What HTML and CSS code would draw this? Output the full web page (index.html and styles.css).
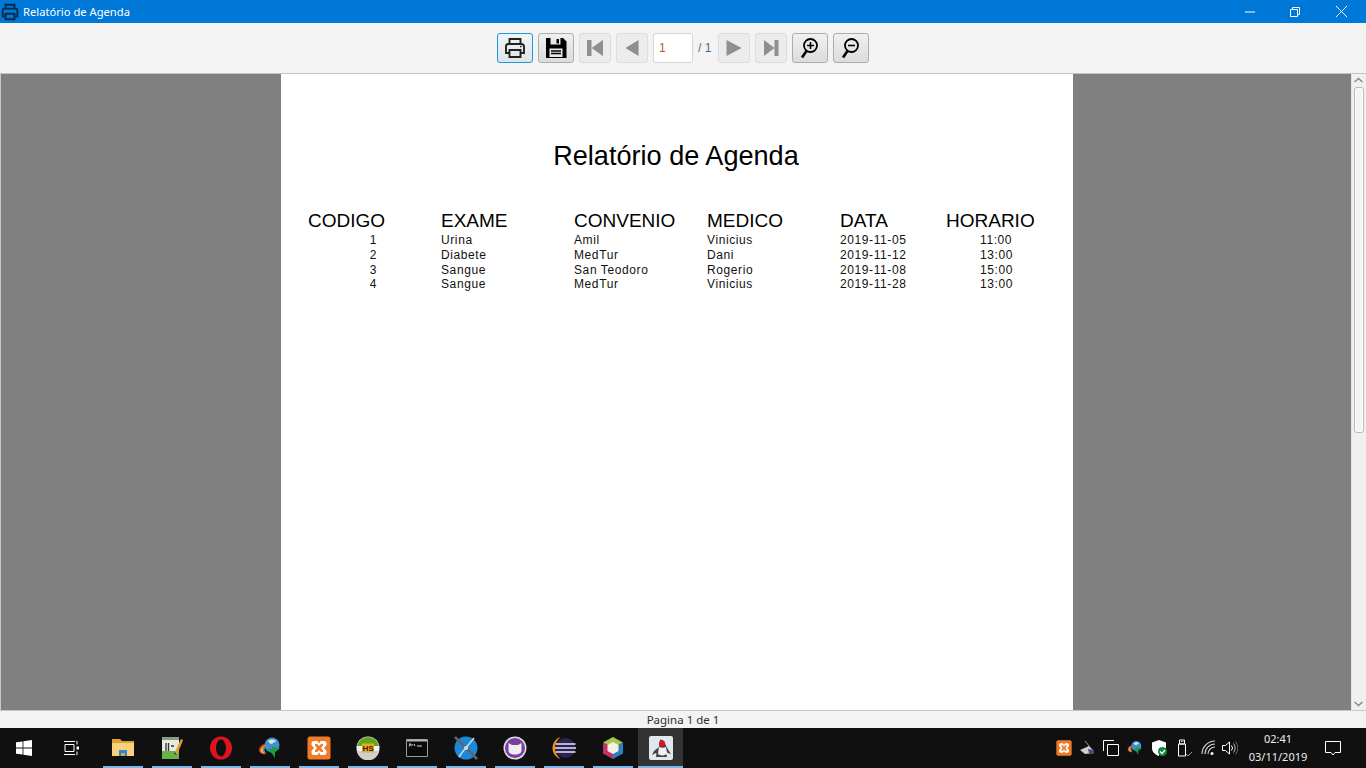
FILE: index.html
```html
<!DOCTYPE html>
<html lang="pt">
<head>
<meta charset="utf-8">
<title>Relatório de Agenda</title>
<link rel="stylesheet" href="styles.css">
</head>
<body>
<svg class="defs" width="0" height="0" aria-hidden="true">
  <defs>
    <symbol id="xampp" viewBox="0 0 24 24">
      <rect x="0.5" y="0.5" width="23" height="23" rx="2.5" fill="#f07a25"/>
      <path d="M7 5h3.500l1.500 2.500L13.500 5H17a2.500 2.500 0 0 1 2.500 2.500v1.500L17 12l2.500 3v1.500A2.500 2.500 0 0 1 17 19h-3.500L12 16.500 10.500 19H7a2.500 2.500 0 0 1-2.500-2.500V15L7 12 4.500 9V7.500A2.500 2.500 0 0 1 7 5z" fill="#fff"/>
      <path d="M8 8h2l2 2 2-2h2v1.500L14 12l2 2.500V16h-2l-2-2-2 2H8v-1.500L10 12 8 9.500z" fill="#f07a25"/>
    </symbol>
    <symbol id="idm" viewBox="0 0 24 24">
      <circle cx="14" cy="9" r="7.500" fill="#3f8fd8"/>
      <path d="M10 5c2-2 6-2 8 0-1 2-3 1-4 3-2 0-3-1-4-3z" fill="#d9e8c9"/>
      <path d="M1 14c1-5 5-7 8-6-3 1-5 3-5 6 0 2 2 3 4 4-4 1-7-1-7-4z" fill="#e23b2e"/>
      <path d="M2.500 14c1-3 4-5 6-5-2 1-3.500 3-3.500 5 0 1.500 1 2.500 3 3.500-3 0-5.500-1-5.500-3.500z" fill="#f4c01e"/>
      <path d="M4.500 14c.5-2 2-3 3.500-3.500-1 1-1.500 2.500-1.500 3.500 0 1 .5 2 2 3-2 0-4-1-4-3z" fill="#3f9bd8"/>
      <path d="M8 13h6v-2.500l8 2-5 3v6.500l-3-4.500z" fill="#1f9c3a"/>
    </symbol>
  </defs>
</svg>

<header class="titlebar">
  <svg class="title-icon" viewBox="0 0 16 16" width="18" height="18"><path d="M4 5V1.500h8V5M4 12H1.500V6.500a1.500 1.500 0 0 1 1.500-1.500h10a1.500 1.500 0 0 1 1.500 1.500V12H12M4 9.500h8v5H4z" fill="none" stroke="#0b2a4a" stroke-width="1.700"/></svg>
  <span class="title-text">Relatório de Agenda</span>
  <div class="winctl">
    <span class="winbtn"><svg viewBox="0 0 10 10" width="10" height="10"><path d="M0 5h10" stroke="#fff" stroke-width="1"/></svg></span>
    <span class="winbtn"><svg viewBox="0 0 10 10" width="10" height="10"><path d="M.5 2.500h7v7h-7zM2.500 2.500V.5h7v7H7.500" fill="none" stroke="#fff"/></svg></span>
    <span class="winbtn"><svg viewBox="0 0 10 10" width="11" height="11"><path d="M0 0l10 10M10 0L0 10" stroke="#fff" stroke-width=".9"/></svg></span>
  </div>
</header>

<nav class="toolbar">
  <button class="tb focus"><svg viewBox="0 0 24 24" width="24" height="24"><path d="M6.500 8V3h11v5M6.500 17H3V10.500A2.500 2.500 0 0 1 5.500 8h13a2.500 2.500 0 0 1 2.500 2.500V17h-3.500M6.500 14h11v7h-11z" fill="none" stroke="#222" stroke-width="1.900"/><path d="M17 10.500h1.500" stroke="#222" stroke-width="1.500"/></svg></button>
  <button class="tb"><svg viewBox="0 0 24 24" width="24" height="24"><path d="M2 2h17l3.500 3.500V22H2z" fill="#000"/><path d="M6.500 2h10v6.500h-10z" fill="#e8e8e8"/><path d="M12.500 3h2.500v4.500h-2.500z" fill="#000"/><path d="M5.500 12.500h13V21h-13z" fill="#e8e8e8"/><path d="M7 15h10M7 17.500h10" stroke="#000" stroke-width="1.300"/></svg></button>
  <button class="tb off"><svg viewBox="0 0 24 24" width="24" height="24"><path d="M4 4h4.500v16H4zM20 4v16L8.500 12z" fill="#8f8f8f"/></svg></button>
  <button class="tb off"><svg viewBox="0 0 24 24" width="24" height="24"><path d="M18.500 4v16L5.500 12z" fill="#8f8f8f"/></svg></button>
  <div class="pageinput">1</div>
  <span class="pagecount">/ 1</span>
  <button class="tb off"><svg viewBox="0 0 24 24" width="24" height="24"><path d="M4.500 4v16l15-8z" fill="#8f8f8f"/></svg></button>
  <button class="tb off"><svg viewBox="0 0 24 24" width="24" height="24"><path d="M19.500 4H15.500v16h4zM5 4v16l10.500-8z" fill="#8f8f8f"/></svg></button>
  <button class="tb zoomb"><svg viewBox="0 0 24 24" width="24" height="24"><circle cx="12.500" cy="9.500" r="6.500" fill="none" stroke="#000" stroke-width="1.800"/><path d="M8.500 15l-4.500 6.500" stroke="#000" stroke-width="2.600"/><path d="M9 9.500h7M12.500 6v7" stroke="#000" stroke-width="1.600"/></svg></button>
  <button class="tb zoomb"><svg viewBox="0 0 24 24" width="24" height="24"><circle cx="12.500" cy="9.500" r="6.500" fill="none" stroke="#000" stroke-width="1.800"/><path d="M8.500 15l-4.500 6.500" stroke="#000" stroke-width="2.600"/><path d="M9 9.500h7" stroke="#000" stroke-width="1.600"/></svg></button>
</nav>

<main class="viewer">
  <div class="canvas">
    <section class="page">
      <h1 class="report-title">Relatório de Agenda</h1>
      <div class="report">
        <div class="hd">CODIGO</div><div class="hd">EXAME</div><div class="hd">CONVENIO</div><div class="hd">MEDICO</div><div class="hd">DATA</div><div class="hd">HORARIO</div>
        <div class="c num">1</div><div class="c">Urina</div><div class="c">Amil</div><div class="c">Vinicius</div><div class="c">2019-11-05</div><div class="c hr">11:00</div>
        <div class="c num">2</div><div class="c">Diabete</div><div class="c">MedTur</div><div class="c">Dani</div><div class="c">2019-11-12</div><div class="c hr">13:00</div>
        <div class="c num">3</div><div class="c">Sangue</div><div class="c">San Teodoro</div><div class="c">Rogerio</div><div class="c">2019-11-08</div><div class="c hr">15:00</div>
        <div class="c num">4</div><div class="c">Sangue</div><div class="c">MedTur</div><div class="c">Vinicius</div><div class="c">2019-11-28</div><div class="c hr">13:00</div>
      </div>
    </section>
  </div>
  <aside class="scrollbar">
    <svg class="arrow" viewBox="0 0 15 13" width="15" height="13"><path d="M3.500 8l4-3.500 4 3.500" fill="none" stroke="#8a8a8a" stroke-width="1.500"/></svg>
    <div class="thumb"></div>
    <svg class="arrow down" viewBox="0 0 15 13" width="15" height="13"><path d="M3.500 5l4 3.500 4-3.500" fill="none" stroke="#8a8a8a" stroke-width="1.500"/></svg>
  </aside>
</main>

<div class="status">Pagina 1 de 1</div>

<footer class="taskbar">
  <span class="tk-start"><svg viewBox="0 0 16 16" width="16" height="16"><path d="M0 2.300l6.600-.9v6.200H0zM7.400 1.300L16 0v7.600H7.400zM0 8.400h6.600v6.200L0 13.700zM7.400 8.400H16V16l-8.600-1.200z" fill="#fff"/></svg></span>
  <span class="tk-view"><svg viewBox="0 0 16 16" width="16" height="16"><path d="M0 1.500h11M0 14.500h11M1 4.500h9v7H1zM13 1v3.500M13 11.500V15" fill="none" stroke="#fff" stroke-width="1"/><path d="M12.500 6.500h2.500v3h-2.500z" fill="#fff"/></svg></span>
  <div class="apps">
    <span class="app"><svg viewBox="0 0 24 24" width="24" height="24"><path d="M1 3h8l2 2h12v3H1z" fill="#d9a436"/><path d="M1 7h22v13H1z" fill="#f7d27a"/><path d="M8 20v-6h8v6h-2.500v-3h-3v3z" fill="#2a86d8"/><path d="M10.500 17h3v3h-3z" fill="#e0a82e"/></svg></span>
    <span class="app"><svg viewBox="0 0 24 24" width="24" height="24"><path d="M2 1h17v22H2z" fill="#e4ebe0"/><path d="M2 1h17v3H2z" fill="#8a9a8a"/><path d="M2 15h17v8H2z" fill="#66b54a"/><path d="M6 7v8M8.500 7v8M11 10h3" stroke="#333" stroke-width="1.300"/><path d="M14 18L21 3l2 1-6 15z" fill="#e0a030"/><path d="M14 18l1-2 2 3z" fill="#333"/></svg></span>
    <span class="app"><svg viewBox="0 0 24 24" width="24" height="24"><ellipse cx="12" cy="12" rx="11" ry="11.500" fill="#e0121f"/><ellipse cx="12" cy="12" rx="5" ry="8.500" fill="#101010"/></svg></span>
    <span class="app"><svg width="24" height="24"><use href="#idm"/></svg></span>
    <span class="app"><svg width="24" height="24"><use href="#xampp"/></svg></span>
    <span class="app"><svg viewBox="0 0 24 24" width="24" height="24"><circle cx="12" cy="12" r="11.500" fill="#f2f2f2"/><path d="M.8 10a11.500 11.500 0 0 1 22.400 0z" fill="#63a51f"/><path d="M.7 15a11.500 11.500 0 0 0 22.600 0z" fill="#cfcfcf"/><path d="M6 7.500h12v9H6z" fill="#efa91d"/><text x="12" y="15.200" class="hs">HS</text></svg></span>
    <span class="app"><svg viewBox="0 0 24 24" width="24" height="24"><path d="M1.500 3.500h21v17h-21z" fill="#0b0b0b" stroke="#9a9a9a"/><path d="M2 3.500h20v2H2z" fill="#b5b5b5"/><path d="M4 8h2M4 10h1v-2M7 8v2M9 8l1 2M12 10h5" stroke="#ddd" stroke-width="1" fill="none"/></svg></span>
    <span class="app"><svg viewBox="0 0 24 24" width="24" height="24"><circle cx="12" cy="12" r="11.500" fill="#1e88d8"/><path d="M1 1l22 22" stroke="#5b6670" stroke-width="2.500"/><path d="M20 2C17 6 14 9 11 13c-2 2-4 5-6 8" stroke="#d6dde2" stroke-width="1.500" fill="none"/><circle cx="12" cy="12" r="2" fill="#d6dde2"/></svg></span>
    <span class="app"><svg viewBox="0 0 24 24" width="24" height="24"><circle cx="12" cy="12" r="11.500" fill="#e2dbe8"/><circle cx="12" cy="12" r="10" fill="#7b3f9e"/><path d="M5.500 7l3.500 2h6l3.500-2v7c0 3-2 4.500-6.500 4.500S5.500 17 5.500 14z" fill="#f0ecf2"/></svg></span>
    <span class="app"><svg viewBox="0 0 24 24" width="24" height="24"><circle cx="13.500" cy="12" r="10" fill="#2c2255"/><path d="M3.500 8h20M3 12h21M3.500 16h20" stroke="#e9e6f2" stroke-width="1.500"/><path d="M8.500 1C3.500 3 .5 7 .5 12s3 9 8 11C5 20 3 16 3 12s2-8 5.500-11z" fill="#f0901e"/></svg></span>
    <span class="app"><svg viewBox="0 0 24 24" width="24" height="24"><path d="M12 1l10 5.500L12 12 2 6.500z" fill="#a6c94a"/><path d="M2 6.500L12 12v11L2 17.500z" fill="#c2336a"/><path d="M22 6.500L12 12v11l10-5.500z" fill="#2b7fc4"/><path d="M12 6l5.500 3v6L12 18l-5.500-3V9z" fill="#f4f1e2"/></svg></span>
    <span class="app active"><svg viewBox="0 0 24 24" width="24" height="24"><rect x="0" y="0" width="24" height="24" rx="2" fill="#dfe8ef"/><path d="M11 4c3-1 5 2 6 6l3 5 2 3-3-1-2-1c0 3 1 4 1 5H7c0-2 1-3 0-4l-4 2 2-4 5-4z" fill="#444"/><path d="M10 11c2 1 5 1 7 0l1 6c-1 3-7 3-9 1z" fill="#f2f2f2"/><circle cx="13" cy="7.500" r="3" fill="#e0121f"/></svg></span>
  </div>
  <div class="tray">
    <svg class="t1" width="16" height="16"><use href="#xampp" width="16" height="16"/></svg>
    <svg class="t2" viewBox="0 0 16 16" width="16" height="16"><path d="M1 10l9-4 5 5v2l-9 1z" fill="#cfcfcf"/><path d="M6 1l5 6" stroke="#999" stroke-width="1"/><path d="M9 9l6 1v4l-5-1z" fill="#4a4a7a"/></svg>
    <svg class="t3" viewBox="0 0 16 16" width="16" height="16"><path d="M4.500 4.500h11v11h-11zM.5 11V.5H11" fill="none" stroke="#fff"/></svg>
    <svg class="t4" width="16" height="16"><use href="#idm" width="16" height="16"/></svg>
    <svg class="t5" viewBox="0 0 16 16" width="16" height="16"><path d="M1 2.500L8 0l7 2.500V8H8V16C4 14.500 1 12 1 8z" fill="#fff"/><circle cx="11.500" cy="11.500" r="4.500" fill="#108a3e"/><path d="M9 11.500l2 2 3-3.500" fill="none" stroke="#fff" stroke-width="1.200"/></svg>
    <svg class="t6" viewBox="0 0 16 18" width="16" height="18"><path d="M2.500 1h5v4h-5zM1.500 5h7v12h-7z" fill="none" stroke="#fff"/><path d="M4 2.500h.8M5.500 2.500h.8" stroke="#fff"/><path d="M9 15l2 2 4-4" fill="none" stroke="#999"/></svg>
    <svg class="t7" viewBox="0 0 16 16" width="16" height="16"><path d="M1 14A13 13 0 0 1 14 1M4 14A10 10 0 0 1 14 4M7 14a7 7 0 0 1 7-7" fill="none" stroke="#cfcfcf" stroke-width="1.200"/><circle cx="11" cy="13.500" r="1.500" fill="#fff"/></svg>
    <svg class="t8" viewBox="0 0 16 16" width="16" height="16"><path d="M.5 5.500h3l4-3.500v12l-4-3.500h-3z" fill="none" stroke="#fff"/><path d="M9.500 5.500a4 4 0 0 1 0 5" fill="none" stroke="#fff"/><path d="M11.500 3.500a7 7 0 0 1 0 9" fill="none" stroke="#bbb"/><path d="M13.500 1.500a10 10 0 0 1 0 13" fill="none" stroke="#666"/></svg>
    <div class="clock"><span>02:41</span><span>03/11/2019</span></div>
    <svg class="notif" viewBox="0 0 16 16" width="16" height="16"><path d="M.5 1.500h15v11H10l-2 2.500-2-2.500H.5z" fill="none" stroke="#fff"/></svg>
  </div>
</footer>
</body>
</html>
```

FILE: styles.css
```css
* { box-sizing: border-box; }
html, body { margin: 0; height: 768px; overflow: hidden; }
body { display: flex; flex-direction: column; width: 1366px; background: #f3f3f3; font-family: "Liberation Sans", Arial, sans-serif; }
.defs { position: absolute; }
svg { display: block; flex: none; }

.titlebar { height: 23px; flex: none; background: #0078d7; display: flex; align-items: center; padding-left: 1px; color: #fff; }
.title-text { margin-left: 4px; font: 11.200px/23px "Noto Sans", sans-serif; }
.winctl { margin-left: auto; display: flex; height: 23px; }
.winbtn { width: 45px; display: flex; align-items: center; justify-content: center; }
.winctl .winbtn:last-child { width: 49px; }

.toolbar { height: 51px; flex: none; display: flex; align-items: center; justify-content: center; gap: 5px; background: #f3f3f3; border-bottom: 1px solid #c4c4c4; padding: 0 0 1px; }
.tb { width: 36px; height: 30px; padding: 0; display: flex; align-items: center; justify-content: center; border: 1px solid #adadad; border-radius: 3px; background: linear-gradient(#f0f0f0, #dcdcdc); }
.tb.focus { border: 1.500px solid #1a9ad6; background: linear-gradient(#f2f5f7, #e0e4e6); }
.tb.off { width: 32px; border-color: #dcdcdc; background: #ececec; }
.pageinput { width: 40px; height: 30px; background: #fff; border: 1px solid #d4d4d4; border-radius: 3px; font: 12px/28px "Liberation Sans", sans-serif; color: #b0621a; padding-left: 5px; }
.pagecount { width: 15px; font: 12px/30px "Liberation Sans", sans-serif; color: #3f6d96; white-space: nowrap; }

.viewer { flex: 1; min-height: 0; display: flex; background: #808080; }
.canvas { flex: 1; min-width: 0; display: flex; justify-content: center; border-left: 1px solid #c8c8c8; padding-left: 2px; }
.page { width: 792px; height: 100%; background: #fff; color: #000; padding-left: 27px; }
.report-title { margin: 0; padding: 66px 0 0; width: 736px; text-align: center; font-size: 27.100px; line-height: 31px; font-weight: 400; color: #000; }
.report { margin-top: 38px; display: grid; grid-template-columns: 133px 133px 133px 133px 106px 100px; }
.hd { font-size: 19px; line-height: 23px; height: 24.400px; white-space: nowrap; }
.c { font-size: 12px; line-height: 14.670px; height: 14.670px; white-space: nowrap; letter-spacing: .6px; color: #111; }
.num { text-align: right; padding-right: 64px; }
.hr { padding-left: 34px; }

.scrollbar { width: 15px; flex: none; background: #f0f0f0; display: flex; flex-direction: column; border-left: 1px solid #e4e4e4; }
.arrow { margin-left: -1px; }
.thumb { width: 10px; height: 346px; margin-left: 2px; background: #f4f4f4; border: 1px solid #b8b8b8; border-radius: 3px; box-shadow: inset 0 0 0 1px #fff; }
.down { margin-top: auto; }

.status { height: 18px; flex: none; background: #f3f3f3; border-top: 1px solid #c8c8c8; text-align: center; font: 11.500px/17px "Noto Sans", sans-serif; color: #2e2e2e; }

.taskbar { height: 40px; flex: none; background: #101010; display: flex; align-items: center; color: #fff; }
.tk-start { width: 48px; display: flex; justify-content: center; }
.tk-view { width: 48px; display: flex; justify-content: center; }
.apps { display: flex; margin-left: 7px; height: 40px; }
.app { width: 40px; height: 40px; margin-right: 9px; display: flex; align-items: center; justify-content: center; border-bottom: 2px solid #76b9ed; padding-top: 1px; }
.app.active { width: 45px; margin-left: -4px; background: #333; margin-right: 0; }
.hs { font: 700 8px "Liberation Sans", sans-serif; fill: #222; text-anchor: middle; }

.tray { margin-left: auto; display: flex; align-items: center; height: 40px; padding-right: 25px; }
.t1 { margin-right: 7px; }
.t2 { margin-right: 8px; }
.t3 { margin-right: 8px; }
.t4 { margin-right: 8px; }
.t5 { margin-right: 10px; }
.t6 { margin-right: 8px; }
.t7 { margin-right: 5px; }
.clock { width: 66px; margin-left: 7px; margin-right: 14px; display: flex; flex-direction: column; align-items: center; font: 11px/18px "Noto Sans", sans-serif; color: #eee; white-space: nowrap; }
```
